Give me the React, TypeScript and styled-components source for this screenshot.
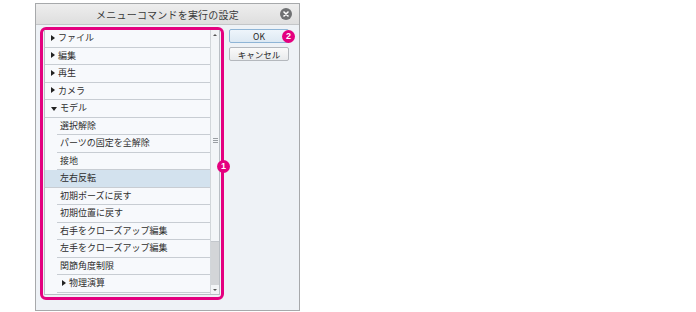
import React from 'react';
import styled, { createGlobalStyle } from 'styled-components';

const GlobalStyle = createGlobalStyle`
  body {
    margin: 0;
    background: #ffffff;
    font-family: "Noto Sans CJK JP", "Liberation Sans", sans-serif;
  }
`;

const Page = styled.div`
  padding: 3px 0 0 35px;
  width: 696px;
  height: 312px;
  box-sizing: border-box;
`;

const Dialog = styled.div`
  width: 265px;
  height: 308px;
  box-sizing: border-box;
  border: 1px solid #a7a9ab;
  background: #eef2f6;
  display: flex;
  flex-direction: column;
`;

const TitleBar = styled.div`
  height: 20px;
  display: grid;
  grid-template-columns: 1fr auto 1fr;
  align-items: center;
  background: linear-gradient(#eeeeee, #dedede);
  border-bottom: 1px solid #c4c6c8;
  font-size: 10px;
  color: #3a3a3a;
`;

const Title = styled.span`
  grid-column: 2;
  letter-spacing: 0.2px;
`;

const Close = styled.span`
  grid-column: 3;
  justify-self: end;
  margin-right: 7px;
  width: 12px;
  height: 12px;
  border-radius: 50%;
  background: #6f7173;
  display: flex;
  align-items: center;
  justify-content: center;
`;

const Body = styled.div`
  display: flex;
  padding: 2px 0 0 4px;
  gap: 5px;
`;

const Frame = styled.div`
  position: relative;
  width: 184px;
  height: 273px;
  box-sizing: border-box;
  border: 3px solid #e4007f;
  border-radius: 6px;
  padding: 0 1px 2px 1px;
  display: flex;
`;

const Badge = styled.span<{ $top: number; $left: number }>`
  position: absolute;
  top: ${p => p.$top}px;
  left: ${p => p.$left}px;
  width: 13px;
  height: 13px;
  border-radius: 50%;
  background: #e4007f;
  color: #fff;
  font-family: "Liberation Sans", sans-serif;
  font-weight: 700;
  font-size: 9px;
  line-height: 13px;
  text-align: center;
`;

const List = styled.div`
  flex: 1;
  display: flex;
  border: 1px solid #b9bec4;
  border-top: none;
  background: #f7f9fc;
  overflow: hidden;
`;

const Rows = styled.div`
  flex: 1;
  overflow: hidden;
`;

const Row = styled.div<{ $indent: number; $selected?: boolean; $child?: boolean }>`
  height: 17.5px;
  box-sizing: border-box;
  display: flex;
  align-items: center;
  padding-bottom: 1px;
  padding-left: ${p => p.$indent}px;
  font-size: 9px;
  color: #2e2e2e;
  background: ${p => (p.$selected ? '#d3e2ee' : 'transparent')};
  border-bottom: 1px solid #c8cdd3;
  margin-left: ${p => (p.$child && !p.$selected ? 12 : 0)}px;
  ${p => (p.$child && !p.$selected ? `padding-left: ${p.$indent - 12}px;` : '')}
`;

const Arrow = styled.span<{ $open?: boolean }>`
  width: 0;
  height: 0;
  margin-right: 3px;
  ${p =>
    p.$open
      ? `border-left: 3.5px solid transparent; border-right: 3.5px solid transparent; border-top: 4px solid #222; margin-top: 2px;`
      : `border-top: 3.5px solid transparent; border-bottom: 3.5px solid transparent; border-left: 4px solid #222;`}
`;

const Scrollbar = styled.div`
  width: 8px;
  display: flex;
  flex-direction: column;
  border-left: 1px solid #d2d6da;
  background: #d3d5d8;
`;

const ScrollArrow = styled.div<{ $up?: boolean }>`
  height: 9px;
  background: #f2f4f6;
  display: flex;
  align-items: center;
  justify-content: center;
  &::after {
    content: '';
    border-left: 2px solid transparent;
    border-right: 2px solid transparent;
    ${p => (p.$up ? 'border-bottom: 2px solid #555;' : 'border-top: 2px solid #555;')}
  }
`;

const Thumb = styled.div`
  height: 202px;
  background: #f3f5f8;
  border-bottom: 1px solid #c3c7cc;
  display: flex;
  align-items: center;
  justify-content: center;
`;

const Grip = styled.div`
  width: 5px;
  height: 5px;
  background: repeating-linear-gradient(#9a9ea3 0 1px, transparent 1px 2px);
`;

const Track = styled.div`
  flex: 1;
`;

const Buttons = styled.div`
  position: relative;
  display: flex;
  flex-direction: column;
  gap: 4px;
  padding-top: 2px;
`;

const Button = styled.div<{ $default?: boolean }>`
  width: 60px;
  height: 14px;
  box-sizing: border-box;
  border: 1px solid ${p => (p.$default ? '#8fb5d6' : '#b4b8bd')};
  background: ${p => (p.$default ? 'linear-gradient(#eef5fb, #dde9f3)' : 'linear-gradient(#fafafa, #e8eaec)')};
  border-radius: 2px;
  font-size: 8.5px;
  font-weight: 400;
  color: #222;
  display: flex;
  align-items: center;
  justify-content: center;
`;

type Item = { label: string; level: 0 | 1; arrow?: 'open' | 'closed'; selected?: boolean };

const items: Item[] = [
  { label: 'ファイル', level: 0, arrow: 'closed' },
  { label: '編集', level: 0, arrow: 'closed' },
  { label: '再生', level: 0, arrow: 'closed' },
  { label: 'カメラ', level: 0, arrow: 'closed' },
  { label: 'モデル', level: 0, arrow: 'open' },
  { label: '選択解除', level: 1 },
  { label: 'パーツの固定を全解除', level: 1 },
  { label: '接地', level: 1 },
  { label: '左右反転', level: 1, selected: true },
  { label: '初期ポーズに戻す', level: 1 },
  { label: '初期位置に戻す', level: 1 },
  { label: '右手をクローズアップ編集', level: 1 },
  { label: '左手をクローズアップ編集', level: 1 },
  { label: '関節角度制限', level: 1 },
  { label: '物理演算', level: 1, arrow: 'closed' },
  { label: '表示', level: 0, arrow: 'closed' },
];

export default function App() {
  return (
    <Page>
      <GlobalStyle />
      <Dialog>
        <TitleBar>
          <Title>メニューコマンドを実行の設定</Title>
          <Close>
            <svg width="6" height="6" viewBox="0 0 6 6">
              <path d="M1 1L5 5M5 1L1 5" stroke="#fff" strokeWidth="1.6" strokeLinecap="round" />
            </svg>
          </Close>
        </TitleBar>
        <Body>
          <Frame>
            <List>
              <Rows>
                {items.map(item => {
                  const indent = item.level === 0 ? 6 : item.arrow ? 17 : 15;
                  return (
                    <Row key={item.label} $indent={indent} $selected={item.selected} $child={item.level === 1}>
                      {item.arrow && <Arrow $open={item.arrow === 'open'} />}
                      {item.label}
                    </Row>
                  );
                })}
              </Rows>
              <Scrollbar>
                <ScrollArrow $up />
                <Thumb>
                  <Grip />
                </Thumb>
                <Track />
                <ScrollArrow />
              </Scrollbar>
            </List>
            <Badge $top={130} $left={174}>1</Badge>
          </Frame>
          <Buttons>
            <Button $default>OK</Button>
            <Button>キャンセル</Button>
            <Badge $top={3} $left={53}>2</Badge>
          </Buttons>
        </Body>
      </Dialog>
    </Page>
  );
}
